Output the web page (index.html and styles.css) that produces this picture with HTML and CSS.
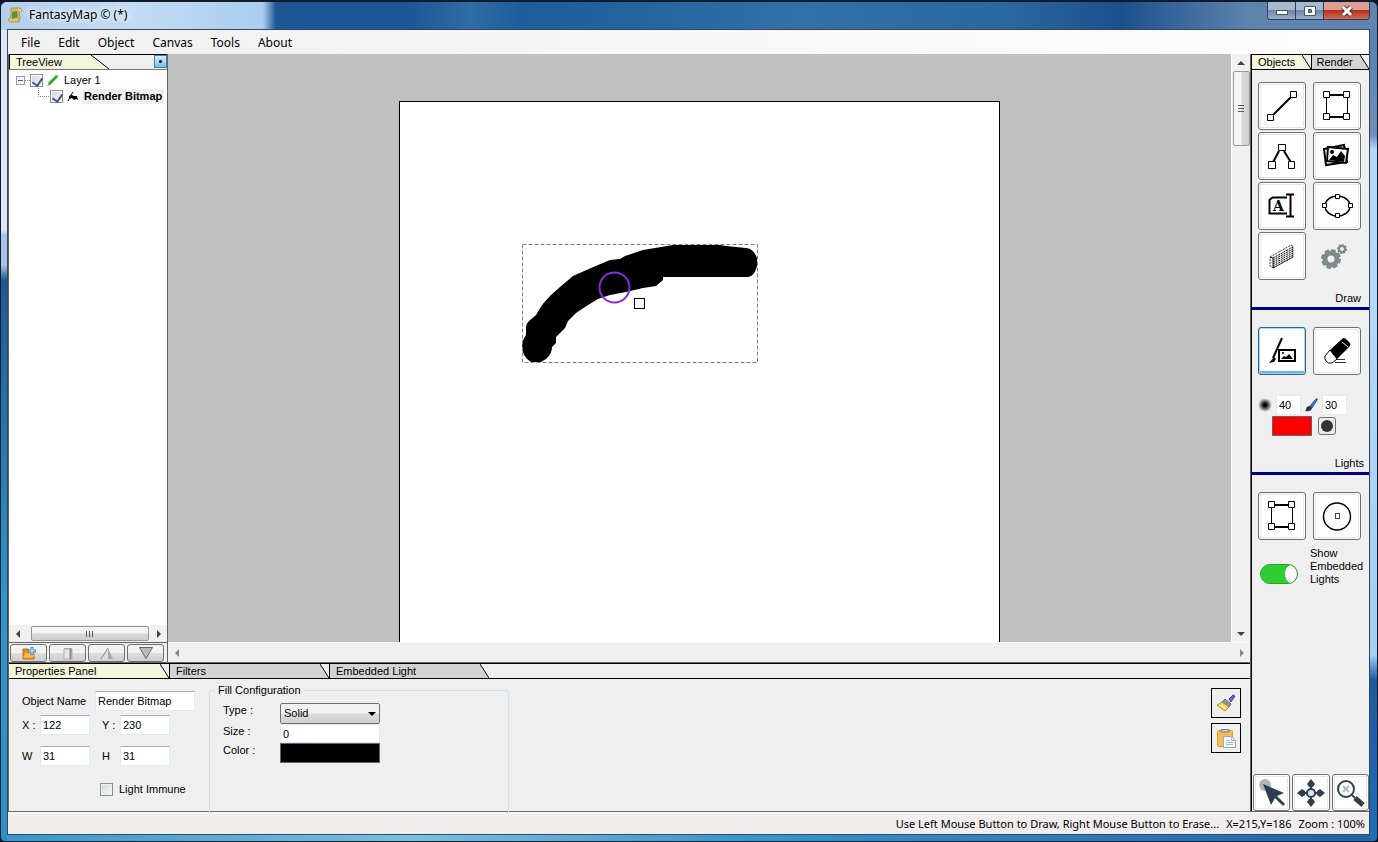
FILE: index.html
```html
<!DOCTYPE html>
<html lang="en">
<head>
  <meta charset="UTF-8" />
  <meta name="viewport" content="width=device-width, initial-scale=1.0"/>
  <title>FantasyMap</title>
  <link rel="stylesheet" href="styles.css">
</head>
<body>

<!-- Shared shapes -->
<svg class="defs" width="0" height="0">
  <defs>
    <g id="rectNodes">
      <path d="M6.500 8V28M27.500 8V28" stroke="#000" stroke-width="1"/>
      <path d="M7 6H27M7 28H27" stroke="#000" stroke-width="2"/>
      <path d="M3.500 2.500h6v6h-6zM23.500 2.500h6v6h-6zM3.500 24.500h6v6h-6zM23.500 24.500h6v6h-6z" fill="#fff" stroke="#000"/>
    </g>
    <radialGradient id="soft"><stop offset="0.200" stop-color="#000"/><stop offset="1" stop-color="#000" stop-opacity="0"/></radialGradient>
  </defs>
</svg>

<div class="window">
  <header class="titlebar">
    <svg class="app-icon" width="16" height="16" viewBox="0 0 16 16">
      <path d="M4 1h9l2 2-1 2h-2l1 6-1 4H3L1 13l2-2 1-3z" fill="#d9b45c" stroke="#b8944c"/>
      <path d="M5 5l5-1 1 6-6 2z" fill="#4f9a3c"/>
      <path d="M11 2l3 1-1 2M2 13h8" fill="none" stroke="#f5df9e"/>
    </svg>
    <h1>FantasyMap © (*)</h1>
    <div class="win-buttons">
      <button class="win-min" aria-label="Minimize"><svg width="14" height="12"><rect x="1.500" y="5.500" width="11" height="4" fill="#fff" stroke="#48546a"/></svg></button>
      <button class="win-max" aria-label="Maximize"><svg width="12" height="12"><path d="M.5 1.500h11v9H.5zM4.500 4.500v3h3v-3z" fill="#fff" fill-rule="evenodd" stroke="#48546a"/></svg></button>
      <button class="win-close" aria-label="Close"><svg width="14" height="12"><path d="M3 2L11 10M11 2L3 10" stroke="#54303a" stroke-width="5"/><path d="M3 2L11 10M11 2L3 10" stroke="#fff" stroke-width="3"/></svg></button>
    </div>
  </header>

  <div class="client">
    <nav class="menubar">
      <button>File</button><button>Edit</button><button>Object</button><button>Canvas</button><button>Tools</button><button>About</button>
    </nav>

    <div class="main">
      <div class="left">
        <div class="workspace">

          <!-- Layer tree -->
          <aside class="tree-panel">
            <div class="tabs tree-tabs">
              <button class="tab active">TreeView</button>
              <svg class="slant wide" viewBox="0 0 18 14" preserveAspectRatio="none"><path class="cut active" d="M0 0L18 14H0z"/><path class="line" d="M0 0L18 14"/></svg>
              <button class="pin" aria-label="Collapse"></button>
            </div>
            <div class="tree">
              <div class="node">
                <svg width="16" height="16"><rect x="2.500" y="4.500" width="8" height="8" fill="#f4f6fa" stroke="#919bab"/><path d="M4 8.500h5" stroke="#3f57a0"/><path d="M11 8.500h5" stroke="#888" stroke-dasharray="1 1"/></svg>
                <input type="checkbox" id="layer1" checked>
                <svg width="16" height="16"><path d="M4 12L12 4" stroke="#25b12c" stroke-width="3"/><path d="M2.500 14l1-3 2 1.500z" fill="#9c8a60"/><path d="M11 4l1-1 1.500 1" stroke="#d88" fill="none"/></svg>
                <label for="layer1">Layer 1</label>
              </div>
              <div class="node child">
                <svg width="12" height="16"><path d="M.5 0V8.500H12" fill="none" stroke="#888" stroke-dasharray="1 1"/></svg>
                <input type="checkbox" id="bitmap" checked>
                <svg width="16" height="16"><path d="M3 13l3-6 2-3" fill="none" stroke="#000"/><path d="M4 8l3-1 2 1 3 0 1 4-2-1-2 1-2-2-3 1z"/></svg>
                <label class="selected" for="bitmap">Render Bitmap</label>
              </div>
            </div>
            <div class="hscroll">
              <button class="arrow" aria-label="Scroll left"><svg width="6" height="8"><path d="M5 0v8L1 4z"/></svg></button>
              <div class="thumb"><i></i><i></i><i></i></div>
              <button class="arrow" aria-label="Scroll right"><svg width="6" height="8"><path d="M1 0v8l4-4z"/></svg></button>
            </div>
            <div class="tree-tools">
              <button aria-label="Add layer"><svg width="16" height="14"><path d="M2 3h5l1 2h5v8H2z" fill="#d98e1d" stroke="#b9720c"/><path d="M2 12l2-5h10l-2 5z" fill="#f3b547"/><path d="M11 1v8M7 5h8" stroke="#3f8fd0" stroke-width="3"/><path d="M11 2v6M8 5h6" stroke="#d8f0ff"/></svg></button>
              <button aria-label="Delete"><svg width="12" height="14"><path d="M2 3h8v10H2z" fill="#e8e8e8" stroke="#b0b0b0"/><path d="M2 2.500h8" stroke="#aaa"/><path d="M8.500 3v10" stroke="#888" stroke-width="2"/></svg></button>
              <button aria-label="Move up"><svg width="16" height="14"><path d="M2 13L9 2V13z" fill="#ddd"/><path d="M9 2l5 11H9z" fill="#aaa"/><path d="M2 13L9 2" stroke="#888"/></svg></button>
              <button aria-label="Move down"><svg width="16" height="14"><path d="M1.500 1.500h13L8 12.500z" fill="#bbb" stroke="#666"/></svg></button>
            </div>
          </aside>

          <!-- Drawing area -->
          <section class="canvas-panel">
            <div class="canvas-area">
              <div class="page">
                <svg class="bitmap" width="236" height="119" viewBox="0 0 236 119">
                  <path d="M0 101Q0 97 4 91V83Q4 80 7 77L14 71 17 66Q20 60 29 51L38 43 51 32 69 24 88 16 98 15 103 12 121 6 133 4 151 1 198 1 204 2 224 4Q231 4 235 14V22Q232 33 226 33H141V36L134 42 121 44 104 48 88 51 76 55 66 61 54 69 46 77 43 84 34 93V99L30 103Q30 110 24 115L19 118H9Q0 113 0 101z"/>
                  <rect x=".5" y=".5" width="235" height="118" fill="none" stroke="#808080" stroke-dasharray="4 2"/>
                  <circle cx="92.500" cy="43.500" r="15" fill="none" stroke="#8a2be2" stroke-width="2"/>
                  <rect x="112.500" y="54.500" width="10" height="10" fill="#fff" stroke="#000"/>
                </svg>
              </div>
            </div>
            <div class="vscroll">
              <button class="arrow" aria-label="Scroll up"><svg width="8" height="6"><path d="M0 5h8L4 1z"/></svg></button>
              <div class="thumb"><i></i><i></i><i></i></div>
              <button class="arrow last" aria-label="Scroll down"><svg width="8" height="6"><path d="M0 1h8L4 5z"/></svg></button>
            </div>
            <div class="hscroll idle">
              <button class="arrow" aria-label="Scroll left"><svg width="6" height="8"><path d="M5 0v8L1 4z"/></svg></button>
              <button class="arrow" aria-label="Scroll right"><svg width="6" height="8"><path d="M1 0v8l4-4z"/></svg></button>
            </div>
          </section>
        </div>

        <!-- Properties -->
        <section class="properties">
          <div class="tabs prop-tabs">
            <button class="tab active">Properties Panel</button>
            <svg class="slant" viewBox="0 0 9 14" preserveAspectRatio="none"><path class="cut active" d="M0 0L9 14H0z"/><path class="line" d="M0 0L9 14"/></svg>
            <button class="tab">Filters</button>
            <svg class="slant" viewBox="0 0 9 14" preserveAspectRatio="none"><path class="cut" d="M0 0L9 14H0z"/><path class="line" d="M0 0L9 14"/></svg>
            <button class="tab">Embedded Light</button>
            <svg class="slant" viewBox="0 0 9 14" preserveAspectRatio="none"><path class="cut" d="M0 0L9 14H0z"/><path class="line" d="M0 0L9 14"/></svg>
          </div>
          <div class="prop-body">
            <div class="object-form">
              <div class="field-row">
                <label class="name-label" for="objName">Object Name</label><input class="text name" id="objName" type="text" value="Render Bitmap">
              </div>
              <div class="field-row">
                <label for="posX">X :</label><input class="text" id="posX" type="text" value="122">
                <label class="second" for="posY">Y :</label><input class="text" id="posY" type="text" value="230">
              </div>
              <div class="field-row size">
                <label for="sizeW">W</label><input class="text" id="sizeW" type="text" value="31">
                <label class="second" for="sizeH">H</label><input class="text" id="sizeH" type="text" value="31">
              </div>
              <div class="immune">
                <input type="checkbox" id="immune"><label for="immune">Light Immune</label>
              </div>
            </div>
            <fieldset class="fill">
              <legend>Fill Configuration</legend>
              <div class="fill-grid">
                <label for="fillType">Type :</label>
                <div class="select-wrap">
                  <select id="fillType"><option>Solid</option></select>
                  <svg class="caret" width="8" height="4"><path d="M0 0h8L4 4z"/></svg>
                </div>
                <label for="fillSize">Size :</label>
                <input class="text" id="fillSize" type="text" value="0">
                <label for="fillColor">Color :</label>
                <button class="swatch black" id="fillColor"></button>
              </div>
            </fieldset>
            <div class="clip-buttons">
              <button aria-label="Copy style"><svg width="20" height="20"><path d="M13 6l4-4 2 1-4 6z" fill="#6a66c8" stroke="#4842a0"/><path d="M9 6l6 5-2 3-7-5z" fill="#8a929c" stroke="#687078"/><path d="M6 9l7 5-4 4-8-6z" fill="#f5d55c" stroke="#b58f28"/><path d="M5 12l4 3" stroke="#fff3b8" stroke-width="2"/></svg></button>
              <button aria-label="Paste style"><svg width="20" height="20"><rect x="1.500" y="2.500" width="15" height="16" rx="1" fill="#f4bd57" stroke="#e0a030"/><path d="M5 4V1.500h8V4z" fill="#c8ccd0" stroke="#7c848c"/><path d="M7.500 8.500h8l4 4v7h-12z" fill="#f6f9fe" stroke="#9aa8bc"/><path d="M15.500 8.500v4h4M10 12.500h4M10 14.500h7M10 16.500h7" fill="none" stroke="#b0bccb"/></svg></button>
            </div>
          </div>
        </section>
      </div>

      <!-- Tool box -->
      <aside class="toolbox">
        <div class="tabs tool-tabs">
          <button class="tab active">Objects</button>
          <svg class="slant" viewBox="0 0 9 14" preserveAspectRatio="none"><path class="cut active" d="M0 0L9 14H0z"/><path class="line" d="M0 0L9 14"/></svg>
          <button class="tab">Render</button>
          <svg class="slant" viewBox="0 0 9 14" preserveAspectRatio="none"><path class="cut" d="M0 0L9 14H0z"/><path class="line" d="M0 0L9 14"/></svg>
        </div>

        <section class="tools objects">
          <div class="tool-grid">
            <button aria-label="Line"><svg width="34" height="34"><path d="M6 28L28 6" stroke="#000" stroke-width="2"/><path d="M2.500 25.500h6v6h-6zM25.500 2.500h6v6h-6z" fill="#fff" stroke="#000"/></svg></button>
            <button aria-label="Rectangle"><svg width="34" height="34"><use href="#rectNodes"/></svg></button>
            <button aria-label="Polyline"><svg width="34" height="34"><path d="M7 25L14 12M27 25L19 12" stroke="#000" stroke-width="2"/><path d="M13.500 5.500h7v6h-7zM3.500 22.500h7v7h-7zM23.500 22.500h6v7h-6z" fill="#fff" stroke="#000"/></svg></button>
            <button aria-label="Picture"><svg width="34" height="34"><path d="M4 10L24 6l3 17L6 26z" fill="#fff" stroke="#000" stroke-width="2"/><path d="M8 8l20 2-2 14-19-2z" fill="#fff" stroke="#000" stroke-width="2"/><path d="M9 21l4-5 4 2 4-6 4 5-1 6z"/><circle cx="12" cy="13" r="2"/></svg></button>
            <button aria-label="Text"><svg width="34" height="34"><path d="M22 8.500H7.500L4.500 11v13.500H22" fill="none" stroke="#000" stroke-width="2"/><path d="M25.500 5.500v22M21 5.500h8M21 27.500h8" stroke="#000" stroke-width="2"/><text x="8" y="22" font-family="DejaVu Serif, serif" font-size="14" font-weight="bold">A</text></svg></button>
            <button aria-label="Ellipse"><svg width="34" height="34"><ellipse cx="17.500" cy="17" rx="12.500" ry="10" fill="none" stroke="#000" stroke-width="1.500"/><path d="M15.500 5.500h4v4h-4zM15.500 24.500h4v4h-4zM2.500 14.500h4v4h-4zM28.500 14.500h4v4h-4z" fill="#fff" stroke="#000"/></svg></button>
            <button aria-label="Wall"><svg width="34" height="34"><path d="M5 18L26 6l2 1v11L8 29l-3-2z" fill="#eee" stroke="#444" stroke-dasharray="2 1"/><path d="M8 19L28 8M8 21L28 10M8 23L28 12M8 25L28 14M8 27L28 16M8 29L28 18" stroke="#111" stroke-dasharray="2 1"/><path d="M5 18l3 1v10" fill="none" stroke="#222"/></svg></button>
            <button class="flat" aria-label="Settings"><svg width="34" height="34"><circle cx="11" cy="20" r="6" fill="none" stroke="#7d8a8a" stroke-width="5"/><circle cx="11" cy="20" r="8" fill="none" stroke="#7d8a8a" stroke-width="4" stroke-dasharray="4 2.300"/><circle cx="22" cy="10" r="3" fill="none" stroke="#7d8a8a" stroke-width="2"/><circle cx="22" cy="10" r="4" fill="none" stroke="#7d8a8a" stroke-width="2" stroke-dasharray="2 1"/></svg></button>
          </div>
          <h2>Draw</h2>
        </section>

        <section class="tools draw">
          <div class="tool-grid">
            <button class="pressed" aria-label="Draw bitmap"><svg width="34" height="34"><path d="M17 4L8 24" stroke="#000" stroke-width="2"/><path d="M9 23l-5 6 5-1 2-3z"/><rect x="14" y="16" width="16" height="11" fill="#fff" stroke="#000" stroke-width="2"/><path d="M16 25l3-3 2 1 3-3 4 5z"/><circle cx="18" cy="19" r="1"/></svg></button>
            <button aria-label="Eraser"><svg width="34" height="34"><path d="M10 16L22 5q2-2 4 0l4 4q1 2 0 3L17 25z"/><path d="M10 16l-5 6q-1 2 1 5t6 2l5-4z" fill="#fff" stroke="#000"/><path d="M22 8l6 5" stroke="#fff"/><path d="M17 25.500h8M15 28.500h11" stroke="#333"/></svg></button>
          </div>
          <div class="brush">
            <div class="brush-row">
              <svg width="16" height="16"><circle cx="8" cy="8" r="7" fill="url(#soft)"/></svg>
              <input class="text" type="text" value="40" aria-label="Hardness">
              <svg width="15" height="16"><path d="M6 9l6-7q2-1 1 1L8 11z" fill="#3d74cc" stroke="#2c57a4"/><path d="M6 9q-4 0-4 4l-1 1q6 1 7-3z" fill="#333"/></svg>
              <input class="text" type="text" value="30" aria-label="Brush size">
            </div>
            <div class="brush-row colors">
              <button class="swatch red" aria-label="Brush color"></button>
              <button class="dot" aria-label="Brush shape"><svg width="12" height="12"><circle cx="6" cy="6" r="6" fill="#333"/></svg></button>
            </div>
          </div>
          <h2>Lights</h2>
        </section>

        <section class="tools lights">
          <div class="tool-grid">
            <button aria-label="Rectangle light"><svg width="34" height="34"><use href="#rectNodes"/></svg></button>
            <button aria-label="Point light"><svg width="34" height="34"><circle cx="17" cy="17.500" r="13.500" fill="none" stroke="#000" stroke-width="1.500"/><rect x="15.500" y="14.500" width="4" height="5" fill="#fff" stroke="#444"/></svg></button>
          </div>
          <div class="toggle-row">
            <input class="toggle" type="checkbox" id="showLights" checked>
            <label for="showLights">Show Embedded Lights</label>
          </div>
        </section>

        <div class="view-tools">
          <button aria-label="Select"><svg width="30" height="30"><circle cx="8" cy="7" r="6" fill="#aab7bf"/><path d="M6 6l21 9-7 3 8 8-2 2-8-8-4 7z" fill="#2c3e50"/></svg></button>
          <button aria-label="Pan"><svg width="30" height="30"><path d="M15 3v24M3 15h24" stroke="#2c3e50" stroke-width="2"/><path d="M15 1l4 5-2 3h-4l-2-3zM15 29l4-5-2-3h-4l-2 3zM1 15l5-4 3 2v4l-3 2zM29 15l-5-4-3 2v4l3 2z" fill="#2c3e50"/><circle cx="15" cy="15" r="4" fill="#e4e8ea" stroke="#2c3e50" stroke-width="2"/></svg></button>
          <button aria-label="Reset zoom"><svg width="30" height="30"><circle cx="11" cy="11" r="8" fill="#fff" stroke="#2c3e50" stroke-width="2"/><path d="M8 8l6 6M14 8l-6 6" stroke="#aab7bf" stroke-width="2"/><path d="M17 17l3 3" stroke="#2c3e50" stroke-width="2"/><path d="M20 20l8 7" stroke="#2c3e50" stroke-width="5"/></svg></button>
        </div>
      </aside>
    </div>

    <footer class="status">
      <span>Use Left Mouse Button to Draw, Right Mouse Button to Erase...</span>
      <span>X=215,Y=186</span>
      <span>Zoom : 100%</span>
    </footer>
  </div>
</div>

</body>
</html>
```

FILE: styles.css
```css
* { box-sizing: border-box; }
body { margin: 0; background: #0a1524; color: #000; font-family: "Liberation Sans", Arial, sans-serif; font-size: 11px; line-height: 13px; }
button, input, select { font: inherit; color: inherit; margin: 0; padding: 0; border-radius: 0; }
button { border: none; background: none; display: flex; align-items: center; justify-content: center; }
svg { display: block; flex: none; }
.defs { position: absolute; }

/* Window frame */
.window {
  height: 100vh; display: flex; flex-direction: column; padding: 0 7px 6px 6px; overflow: hidden;
  border: 1px solid #101c2c; border-top-width: 2px; border-radius: 7px 7px 5px 5px;
  background:
    linear-gradient(#dce8f6 0 200px, #a9c4e8 205px 235px, #1d5a95 250px, #2b98cc 570px, #2b8fc8) 0 28px / 6px 100% no-repeat,
    linear-gradient(#587fae, #6f90ba 105px, #b5d9fa 120px 200px, #a5cdf5 625px, #1c5a9c 650px, #2272bd) 100% 28px / 7px 100% no-repeat,
    linear-gradient(90deg, #3498cc, #7bbfe0 30%, #3495cc 55%, #2a7fc0 75%, #1c64ac) 0 100% / 100% 8px no-repeat,
    linear-gradient(90deg, #b4cfec, #c4dcf5 130px, #aacdf0 262px, #1d5796 275px, #1d5796 410px, #306ca6 470px, #1d5d9a 520px, #24649f 640px, #3470a8 800px, #2b679f 1010px, #1b508c 1120px, #5f84ae 1250px);
}
.titlebar { flex: none; height: 27px; display: flex; align-items: flex-start; }
.app-icon { margin-top: 5px; }
.titlebar h1 { margin: 5px 0 0 6px; font: 12px/16px "Noto Sans", sans-serif; text-shadow: 0 0 6px #fff, 0 0 6px #fff; }
.win-buttons { display: flex; margin-left: auto; height: 18px; border: 1px solid #303e58; border-top: none; border-radius: 0 0 4px 4px; overflow: hidden; }
.win-buttons button { width: 28px; height: 17px; background: linear-gradient(#a7b9cf 0 45%, #6e86a6 50%, #98b0cc); border-right: 1px solid #303e58; }
.win-buttons .win-close { width: 45px; border: none; background: linear-gradient(#dba093 0 45%, #b4301d 50%, #d16c55); }

.client { flex: 1; min-height: 0; display: flex; flex-direction: column; border: 1px solid #38475a; background: #efefef; }
.menubar { flex: none; height: 24px; display: flex; align-items: center; padding-left: 4px; background: linear-gradient(90deg, #f0f0f0, #fdfdfd); font-family: "Noto Sans", sans-serif; font-size: 12px; }
.menubar button { padding: 0 9px; height: 20px; }
.main { flex: 1; min-height: 0; display: flex; border-left: 1px solid #646464; border-bottom: 1px solid #646464; }
.left { flex: 1; min-width: 0; display: flex; flex-direction: column; border-right: 1px solid #646464; }
.workspace { flex: 1; min-height: 0; display: flex; }

/* Tabs */
.tabs { display: flex; height: 16px; flex: none; border-top: 1px solid #000; border-bottom: 1px solid #000; background: #efefef; }
.tab { background: #d3d3d3; padding-left: 6px; justify-content: flex-start; border-left: 1px solid #000; }
.tab.active { background: #f5f5dc; }
.slant { width: 9px; height: 14px; }
.slant.wide { width: 18px; }
.cut { fill: #d3d3d3; }
.cut.active { fill: #f5f5dc; }
.line { fill: none; stroke: #000; }
.tree-tabs .tab { width: 82px; }
.prop-tabs .tab { width: 151px; }
.tool-tabs .tab { width: 50px; padding-left: 5px; }
.tool-tabs .tab:first-child, .prop-tabs .tab:first-child { border-left: none; padding-left: 6px; }

/* Tree */
.tree-panel { width: 159px; flex: none; display: flex; flex-direction: column; border-right: 1px solid #646464; background: #fff; }
.tree-tabs { border-bottom-color: #777; }
.pin { width: 13px; height: 13px; margin-left: auto; border: 1px solid #3c7fb1; background: radial-gradient(circle, #111 0 1px, transparent 2px), linear-gradient(#d8eefa, #74bfe6); }
.tree { flex: 1; padding-top: 2px; overflow: hidden; }
.node { display: flex; align-items: center; height: 16px; padding-left: 5px; white-space: nowrap; }
.node.child { padding-left: 29px; }
.node label { margin-left: 1px; padding: 0 2px; line-height: 15px; }
.node label.selected { font-weight: bold; background: #efefef; }
input[type="checkbox"]:not(.toggle) { appearance: none; width: 13px; height: 13px; flex: none; border: 1px solid #8e8f8f; background: linear-gradient(135deg, #d4d7dc, #f6f6f6) content-box #fff; padding: 1px; display: flex; }
.node input:checked::before { content: ""; width: 5px; height: 8px; margin-left: 2px; border: solid #42559c; border-width: 0 2px 2px 0; transform: rotate(35deg); }
.node svg:nth-of-type(2) { margin-left: 2px; }

/* Scroll bars */
.hscroll { height: 17px; flex: none; display: flex; align-items: center; background: #f0f0f0; }
.arrow { width: 17px; height: 17px; flex: none; }
.arrow svg { fill: #444; }
.thumb { display: flex; align-items: center; justify-content: center; gap: 1px; border: 1px solid #979797; border-radius: 2px; background: linear-gradient(#f4f4f4 0 48%, #d8d8d8 52%, #cfcfcf); }
.thumb i { width: 2px; height: 6px; border-left: 1px solid #555; }
.hscroll .thumb { width: 118px; height: 15px; margin: 0 auto 0 5px; }
.hscroll.idle { grid-column: 1 / -1; height: 20px; justify-content: space-between; border-top: 1px solid #fafafa; }
.idle .arrow svg { fill: #868686; }
.vscroll { display: flex; flex-direction: column; align-items: center; background: #f0f0f0; border-left: 1px solid #fff; }
.vscroll .thumb { width: 17px; height: 75px; flex-direction: column; background: linear-gradient(90deg, #f4f4f4 0 48%, #d8d8d8 52%, #cfcfcf); }
.vscroll .thumb i { width: 6px; height: 2px; border: none; border-top: 1px solid #555; }
.arrow.last { margin-top: auto; }

.tree-tools { display: flex; gap: 2px; height: 20px; flex: none; padding: 1px; border-top: 1px solid #646464; background: #efefef; }
.tree-tools button { width: 37px; height: 18px; border: 1px solid #707070; border-radius: 3px; background: linear-gradient(#f2f2f2 0 48%, #dcdcdc 52%, #d0d0d0); }

/* Canvas */
.canvas-panel { flex: 1; min-width: 0; display: grid; grid-template-columns: 1fr 19px; grid-template-rows: 1fr 20px; }
.canvas-area { display: flex; justify-content: center; min-height: 0; overflow: hidden; padding-top: 47px; background: #c0c0c0; }
.page { position: relative; width: 601px; height: 800px; flex: none; background: #fff; border: 1px solid #000; }
.bitmap { position: absolute; left: 122px; top: 142px; }

/* Properties panel */
.properties { height: 149px; flex: none; display: flex; flex-direction: column; border-top: 1px solid #646464; }
.prop-body { flex: 1; min-height: 0; display: flex; align-items: flex-start; }
.text { border: 1px solid #e3e9ef; border-top-color: #abadb3; background: #fff; width: 50px; height: 20px; padding: 0 2px; min-width: 0; }
.object-form { width: 200px; padding: 12px 0 0 13px; }
.field-row { display: flex; align-items: center; height: 20px; margin-bottom: 4px; }
.field-row label { width: 18px; white-space: nowrap; }
.field-row .name-label { width: 73px; }
.field-row .name { width: 100px; }
.field-row .second { margin-left: 12px; }
.field-row.size { margin-top: 11px; }
.immune { display: flex; align-items: center; gap: 6px; margin: 17px 0 0 78px; }
.fill { width: 300px; height: 140px; margin: 5px 0 0; padding: 0 0 0 13px; border: 1px solid #d5dfe5; border-radius: 3px; }
.fill legend { margin-left: -8px; padding: 0 3px; }
.fill-grid { display: grid; grid-template-columns: 57px 100px; grid-template-rows: 21px 19px 20px; margin-top: 6px; }
.fill-grid label { padding-top: 1px; }
.fill-grid .text { width: 100px; height: 19px; border-top-color: #e3e9ef; }
.select-wrap { position: relative; }
.select-wrap select { appearance: none; width: 100px; height: 21px; padding: 0 3px; border: 1px solid #707070; border-radius: 2px; background: linear-gradient(#f2f2f2 0 48%, #dcdcdc 52%, #d0d0d0); }
.caret { position: absolute; right: 4px; top: 9px; pointer-events: none; }
.swatch { height: 20px; border: 1px solid #646464; }
.swatch.black { background: #000; }
.swatch.red { width: 40px; background: #f00; }
.clip-buttons { margin: 9px 9px 0 auto; display: flex; flex-direction: column; gap: 5px; }
.clip-buttons button { width: 30px; height: 30px; border: 1px solid #000; }

/* Tool box */
.toolbox { width: 118px; flex: none; display: flex; flex-direction: column; border-left: 1px solid #000; }
.tools { border-bottom: 3px solid #00008b; }
.tool-grid { display: grid; grid-template-columns: 48px 48px; gap: 2px 7px; padding-left: 6px; }
.tool-grid button, .view-tools button { height: 48px; border: 1px solid #707070; border-radius: 3px; background: #fff; box-shadow: inset 0 0 0 1px #fff, inset 0 0 0 2px #e8e8e8; }
.tool-grid .pressed { border-color: #2c628b; box-shadow: inset 0 0 0 1px #a9d9f2, inset 0 -2px 0 1px #6cb8e2; }
.tool-grid .flat { border: none; background: none; box-shadow: none; }
.tools h2 { margin: 0; padding-right: 8px; text-align: right; font-size: 11px; font-weight: normal; }
.objects { height: 240px; padding-top: 12px; }
.objects h2 { margin-top: 12px; }
.draw { height: 165px; padding-top: 17px; }
.brush { padding: 20px 0 0 5px; }
.brush-row { display: flex; align-items: center; gap: 3px; }
.brush-row .text { width: 25px; height: 20px; border-top-color: #e3e9ef; }
.brush-row.colors { gap: 6px; padding-left: 15px; margin-top: 1px; }
.dot { width: 18px; height: 18px; border: 1px solid #707070; border-radius: 3px; background: #eaeaea; }
.draw h2 { margin-top: 21px; padding-right: 5px; }
.lights { padding-top: 17px; border-bottom: none; }
.toggle-row { display: flex; align-items: flex-end; gap: 12px; padding: 7px 4px 0 8px; }
.toggle-row label { width: 54px; flex: none; }
.toggle { appearance: none; width: 38px; height: 20px; flex: none; margin-bottom: 2px; border: 1px solid #22a322; border-radius: 10px; background: radial-gradient(ellipse 6px 9px at 30px 50%, #fff 98%, transparent), #32cd32; }
.view-tools { display: flex; gap: 2px; margin-top: auto; padding-left: 1px; }
.view-tools button { flex: 1; height: 37px; }

/* Status bar */
.status { height: 22px; flex: none; display: flex; align-items: center; justify-content: flex-end; gap: 7px; padding-right: 4px; border-top: 1px solid #fff; background: #f1edec; font-family: "Noto Sans", sans-serif; font-size: 11px; line-height: 16px; }
```
